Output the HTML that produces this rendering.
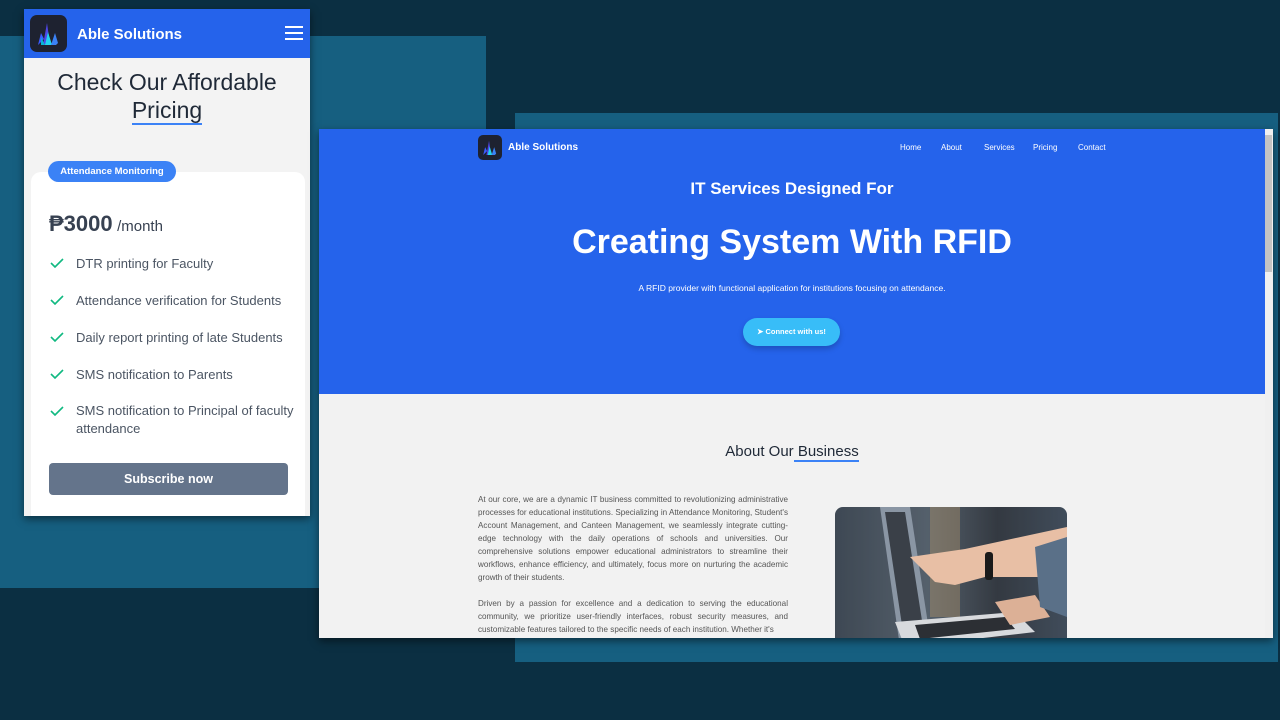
<!DOCTYPE html>
<html><head><meta charset="utf-8"><style>
*{margin:0;padding:0;box-sizing:border-box}
body{width:1280px;height:720px;background:#0b2f42;position:relative;overflow:hidden;font-family:"Liberation Sans",sans-serif}
.abs{position:absolute}
.t1{left:0;top:36px;width:486px;height:552px;background:#165f80}
.t2{left:515px;top:113px;width:763px;height:549px;background:#165f80}
.mob{left:24px;top:9px;width:286px;height:507px;background:#f3f3f3;box-shadow:0 3px 8px rgba(0,0,0,.5);overflow:hidden}
.mh{left:0;top:0;width:286px;height:49px;background:#2563eb}
.logo{background:#1e2230;border-radius:7px;overflow:hidden}
.ctr{text-align:center;white-space:nowrap}
.li{left:52px;font-size:13px;color:#4b5563;line-height:18px}
.ck{left:26px;width:14px;height:10px}
.desk{left:319px;top:129px;width:954px;height:509px;background:#f2f2f2;box-shadow:0 3px 8px rgba(0,0,0,.5);overflow:hidden}
.nav{top:14px;font-size:8px;color:#fff}
p.par{left:159px;width:310px;font-size:8.1px;line-height:13px;color:#555;text-align:justify}
</style></head><body>
<div class="abs t1"></div><div class="abs t2"></div>

<div class="abs mob">
 <div class="abs mh">
  <div class="abs logo" style="left:6px;top:6px;width:37px;height:37px">
   <svg width="37" height="37" viewBox="0 0 37 37"><path d="M8 30 L11 18 L14 24 Z" fill="#3b5bff"/><path d="M13 30 L17 8 L19 22 L16 30Z" fill="#4f46e5"/><path d="M15 30 L18 17 L22 30Z" fill="#22d3ee"/><path d="M21 30 L25 18 L28 28 L26 30Z" fill="#3b82f6"/><path d="M11 22 L15 30 L11 30Z" fill="#06b6d4"/></svg>
  </div>
  <div class="abs" style="left:53px;top:17px;font-size:15px;font-weight:bold;color:#fff">Able Solutions</div>
  <div class="abs" style="left:261px;top:17px;width:18px;height:2px;background:#fff;box-shadow:0 6px 0 #fff,0 12px 0 #fff"></div>
 </div>
 <div class="abs ctr" style="left:0;width:286px;top:59px;font-size:23px;color:#1f2937;line-height:28px">Check Our Affordable<br><span style="border-bottom:2px solid #3b82f6;line-height:24px">Pricing</span></div>
 <div class="abs" style="left:7px;top:163px;width:274px;height:360px;background:#fff;border-radius:10px"></div>
 <div class="abs" style="left:24px;top:152px;width:128px;height:21px;background:#3b82f6;border-radius:11px;color:#fff;font-size:9.5px;font-weight:bold;text-align:center;line-height:21px">Attendance Monitoring</div>
 <div class="abs" style="left:25px;top:202px;color:#374151;white-space:nowrap"><span style="font-size:22px;font-weight:bold">₱3000</span> <span style="font-size:15px">/month</span></div>
 <svg class="abs ck" style="top:249px" viewBox="0 0 14 10"><path d="M1 5l4 4 8-8" stroke="#10b981" stroke-width="1.6" fill="none"/></svg>
 <div class="abs li" style="top:246px">DTR printing for Faculty</div>
 <svg class="abs ck" style="top:286px" viewBox="0 0 14 10"><path d="M1 5l4 4 8-8" stroke="#10b981" stroke-width="1.6" fill="none"/></svg>
 <div class="abs li" style="top:283px">Attendance verification for Students</div>
 <svg class="abs ck" style="top:323px" viewBox="0 0 14 10"><path d="M1 5l4 4 8-8" stroke="#10b981" stroke-width="1.6" fill="none"/></svg>
 <div class="abs li" style="top:320px">Daily report printing of late Students</div>
 <svg class="abs ck" style="top:360px" viewBox="0 0 14 10"><path d="M1 5l4 4 8-8" stroke="#10b981" stroke-width="1.6" fill="none"/></svg>
 <div class="abs li" style="top:357px">SMS notification to Parents</div>
 <svg class="abs ck" style="top:397px" viewBox="0 0 14 10"><path d="M1 5l4 4 8-8" stroke="#10b981" stroke-width="1.6" fill="none"/></svg>
 <div class="abs li" style="top:393px;width:220px">SMS notification to Principal of faculty attendance</div>
 <div class="abs" style="left:25px;top:454px;width:239px;height:32px;background:#64748b;border-radius:4px;color:#fff;font-size:12.5px;font-weight:bold;text-align:center;line-height:32px">Subscribe now</div>
</div>

<div class="abs desk">
 <div class="abs" style="left:0;top:0;width:946px;height:265px;background:#2563eb"></div>
 <div class="abs" style="left:946px;top:0;width:8px;height:509px;background:#f0f0f0"></div>
 <div class="abs" style="left:946px;top:6px;width:7px;height:137px;background:#c4c4c4"></div>
 <div class="abs logo" style="left:159px;top:6px;width:24px;height:25px;border-radius:5px">
  <svg width="24" height="25" viewBox="0 0 37 37"><path d="M8 30 L11 18 L14 24 Z" fill="#3b5bff"/><path d="M13 30 L17 8 L19 22 L16 30Z" fill="#4f46e5"/><path d="M15 30 L18 17 L22 30Z" fill="#22d3ee"/><path d="M21 30 L25 18 L28 28 L26 30Z" fill="#3b82f6"/></svg>
 </div>
 <div class="abs" style="left:189px;top:13px;font-size:10px;font-weight:bold;color:#fff">Able Solutions</div>
 <div class="abs nav" style="left:581px">Home</div>
 <div class="abs nav" style="left:622px">About</div>
 <div class="abs nav" style="left:665px">Services</div>
 <div class="abs nav" style="left:714px">Pricing</div>
 <div class="abs nav" style="left:759px">Contact</div>
 <div class="abs ctr" style="left:0;width:946px;top:50px;font-size:17px;font-weight:bold;color:#fff">IT Services Designed For</div>
 <div class="abs ctr" style="left:0;width:946px;top:94px;font-size:34px;font-weight:bold;color:#fff">Creating System With RFID</div>
 <div class="abs ctr" style="left:0;width:946px;top:154px;font-size:8.5px;color:#fff">A RFID provider with functional application for institutions focusing on attendance.</div>
 <div class="abs" style="left:424px;top:189px;width:97px;height:28px;background:#38bdf8;border-radius:14px;color:#fff;font-size:7.5px;font-weight:bold;text-align:center;line-height:28px;box-shadow:0 3px 6px rgba(0,0,0,.2)">➤ Connect with us!</div>
 <div class="abs ctr" style="left:0;width:946px;top:314px;font-size:15px;color:#1f2937">About Our<span style="border-bottom:2px solid #3b82f6"> Business</span></div>
 <p class="abs par" style="top:364px">At our core, we are a dynamic IT business committed to revolutionizing administrative processes for educational institutions. Specializing in Attendance Monitoring, Student's Account Management, and Canteen Management, we seamlessly integrate cutting-edge technology with the daily operations of schools and universities. Our comprehensive solutions empower educational administrators to streamline their workflows, enhance efficiency, and ultimately, focus more on nurturing the academic growth of their students.<br><br>Driven by a passion for excellence and a dedication to serving the educational community, we prioritize user-friendly interfaces, robust security measures, and customizable features tailored to the specific needs of each institution. Whether it's</p>
 <div class="abs" style="left:516px;top:378px;width:232px;height:140px;border-radius:8px;overflow:hidden;background:linear-gradient(90deg,#3a4450,#5a6672 40%,#2b2f36 70%,#3d4a5a)">
  <svg width="232" height="140" viewBox="0 0 232 140"><rect x="0" y="0" width="232" height="140" fill="#4a525c" opacity=".3"/><rect x="95" y="0" width="30" height="110" fill="#a08a6a" opacity=".5"/><path d="M45 0 L75 0 L95 130 L65 140Z" fill="#8a96a4"/><path d="M50 5 L70 5 L88 120 L68 125Z" fill="#3a4048"/><path d="M60 115 L180 105 L200 125 L70 140Z" fill="#d8dadd"/><path d="M80 118 L170 110 L180 122 L85 132Z" fill="#2c2f34"/><path d="M75 50 L130 42 L232 20 L232 70 L150 70 L120 78 L100 75 Z" fill="#e8bfa5"/><rect x="150" y="45" width="8" height="28" fill="#1a1a1a" rx="3"/><path d="M160 95 L200 88 L215 110 L175 118Z" fill="#dcb096"/><path d="M200 40 L232 30 L232 110 L205 100Z" fill="#5a7088"/></svg>
 </div>
</div>
</body></html>
